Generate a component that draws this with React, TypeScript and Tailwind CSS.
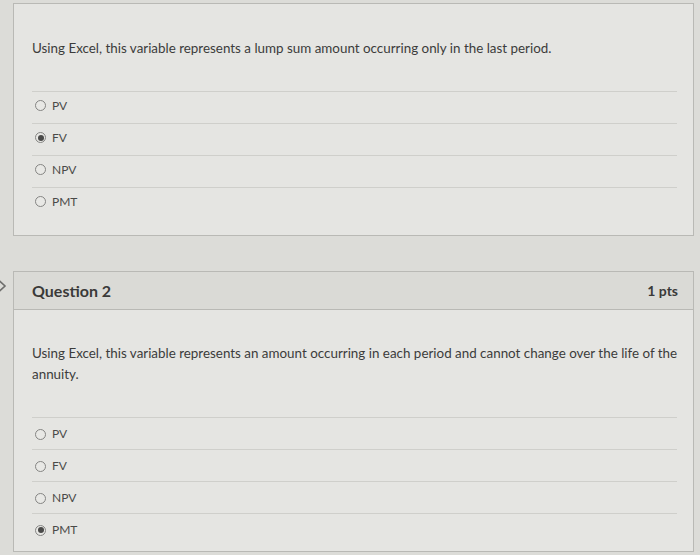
import React from "react";

type Opt = { label: string; checked?: boolean };

const q1: Opt[] = [{ label: "PV" }, { label: "FV", checked: true }, { label: "NPV" }, { label: "PMT" }];
const q2: Opt[] = [{ label: "PV" }, { label: "FV" }, { label: "NPV" }, { label: "PMT", checked: true }];

function Radio({ checked }: { checked?: boolean }) {
  return (
    <span className="relative flex h-[11px] w-[11px] items-center justify-center rounded-full border border-[#858583] bg-[#e8e8e5]">
      {checked && <span className="h-[6px] w-[6px] rounded-full bg-[#4a4a49]" />}
    </span>
  );
}

function Options({ items, shift }: { items: Opt[]; shift: string }) {
  return (
    <div className="ml-[18px] mr-[16px]">
      {items.map((o) => (
        <div
          key={o.label}
          className={`flex h-[32px] items-center gap-[6px] border-t border-[#cfcfcb] pl-[3px] ${shift}`}
        >
          <Radio checked={o.checked} />
          <span className="text-[12px] text-[#4a4a48]">{o.label}</span>
        </div>
      ))}
    </div>
  );
}

export default function App() {
  return (
    <div
      className="relative h-[555px] w-[700px] overflow-hidden bg-[#dcdcd8] pt-[3px]"
      style={{ fontFamily: "Lato, 'Open Sans', sans-serif" }}
    >
      {/* first question card (header scrolled out of view) */}
      <div className="ml-[13px] w-[681px] border border-[#b9b9b5] bg-[#e5e5e2] pb-[16px]">
        <p className="ml-[18px] pt-[34px] text-[13.4px] leading-[21px] text-[#3c3c3b]">
          Using Excel, this variable represents a lump sum amount occurring only in the last period.
        </p>
        <div className="mt-[32px]">
          <Options items={q1} shift="pb-[4px]" />
        </div>
      </div>

      {/* collapse marker at the page edge */}
      <svg className="absolute left-[-4px] top-[279px]" width="12" height="14" viewBox="0 0 12 14">
        <path d="M3 1.5 L9 7 L3 12.5" fill="none" stroke="#6e6e6c" strokeWidth="1.6" />
      </svg>

      {/* second question card */}
      <div className="ml-[13px] mt-[35px] w-[681px] border border-[#b9b9b5] bg-[#e5e5e2] pb-[6px]">
        <div className="flex h-[38px] items-center justify-between border-b border-[#b9b9b5] bg-[#dadad6] pl-[18px] pr-[15px]">
          <span className="text-[16px] font-bold text-[#3a3a39]">Question 2</span>
          <span className="text-[14px] font-bold text-[#3a3a39]">1 pts</span>
        </div>
        <p className="ml-[18px] mr-[14px] pt-[33px] text-[13.4px] leading-[21px] text-[#3c3c3b]">
          Using Excel, this variable represents an amount occurring in each period and cannot change over the life of
          the annuity.
        </p>
        <div className="mt-[32px]">
          <Options items={q2} shift="pt-[1px]" />
        </div>
      </div>
    </div>
  );
}
